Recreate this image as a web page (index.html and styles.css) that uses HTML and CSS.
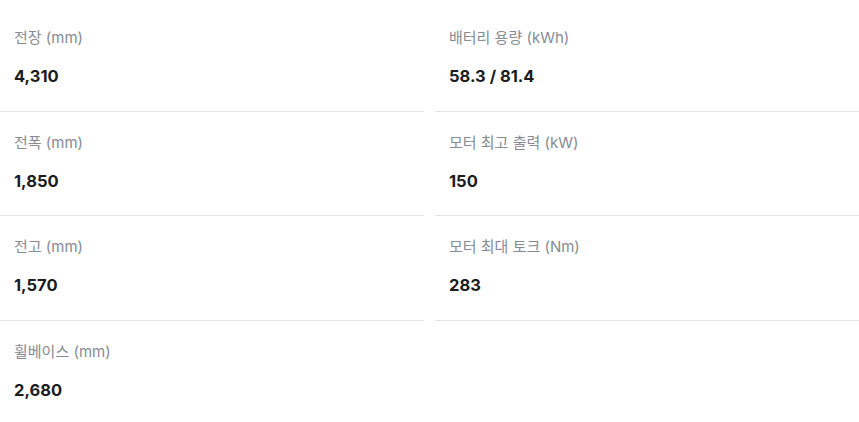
FILE: index.html
```html
<!DOCTYPE html>
<html lang="ko">
<head>
<meta charset="utf-8">
<link rel="stylesheet" href="styles.css">
</head>
<body>
<div class="specs">
  <div class="col">
    <div class="item"><div class="label">전장 (mm)</div><div class="value">4,310</div></div>
    <div class="item"><div class="label">전폭 (mm)</div><div class="value">1,850</div></div>
    <div class="item"><div class="label">전고 (mm)</div><div class="value">1,570</div></div>
    <div class="item last"><div class="label">휠베이스 (mm)</div><div class="value">2,680</div></div>
  </div>
  <div class="col">
    <div class="item"><div class="label">배터리 용량 (kWh)</div><div class="value">58.3 / 81.4</div></div>
    <div class="item"><div class="label">모터 최고 출력 (kW)</div><div class="value">150</div></div>
    <div class="item"><div class="label">모터 최대 토크 (Nm)</div><div class="value">283</div></div>
  </div>
</div>
</body>
</html>
```

FILE: styles.css
```css
html, body {
  margin: 0;
  padding: 0;
  background: #ffffff;
}
body {
  font-family: Inter, "Noto Sans CJK KR", sans-serif;
}
.specs {
  display: grid;
  grid-template-columns: 1fr 1fr;
  column-gap: 11px;
  padding-top: 7px;
}
.col {
  display: flex;
  flex-direction: column;
}
.item {
  display: flex;
  flex-direction: column;
  gap: 16px;
  padding: 21px 14px 22.5px;
  border-bottom: 1px solid #e3e4e6;
}
.item.last {
  border-bottom: none;
}
.label {
  font-size: 15px;
  line-height: 20px;
  color: #868b94;
  font-weight: 400;
}
.value {
  font-size: 16.5px;
  line-height: 24px;
  font-weight: 700;
  color: #1a1c20;
}
```
